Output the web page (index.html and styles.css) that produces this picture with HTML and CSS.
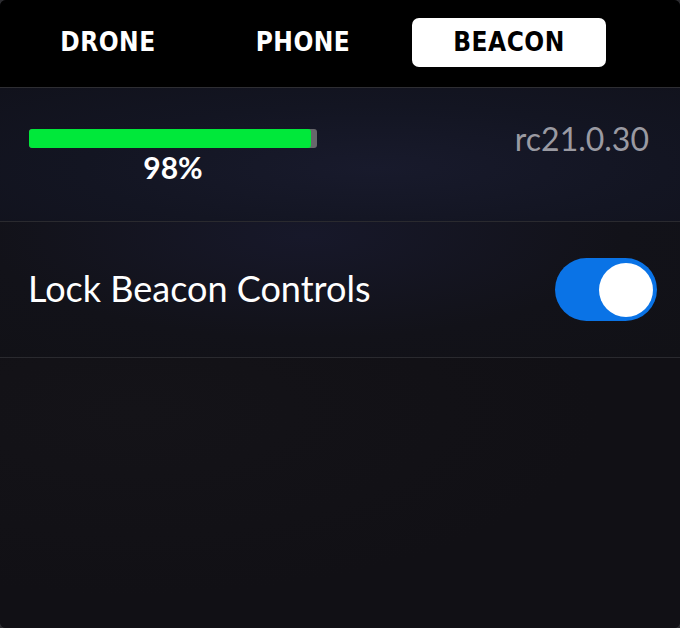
FILE: index.html
```html
<!DOCTYPE html>
<html lang="en">
<head>
    <meta charset="UTF-8">
    <meta name="viewport" content="width=device-width, initial-scale=1.0">
    <title>Beacon</title>
    <link rel="stylesheet" href="styles.css">
</head>
<body>
    <div class="panel">
        <!-- タブ -->
        <div class="tabs">
            <div class="tab">DRONE</div>
            <div class="tab">PHONE</div>
            <div class="tab active">BEACON</div>
        </div>

        <!-- バッテリー -->
        <div class="row battery-row">
            <div class="battery">
                <div class="battery-bar">
                    <div class="battery-fill" style="width: 98%"></div>
                </div>
                <div class="battery-label">98%</div>
            </div>
            <div class="version">rc21.0.30</div>
        </div>

        <!-- ロック -->
        <div class="row lock-row">
            <span class="lock-label">Lock Beacon Controls</span>
            <div class="toggle on"><div class="knob"></div></div>
        </div>

        <div class="empty"></div>
    </div>
</body>
</html>
```

FILE: styles.css
```css
html, body {
    margin: 0;
    height: 100%;
    background-color: #2c2c30;
    font-family: Lato, "Noto Sans", sans-serif;
}

.panel {
    display: flex;
    flex-direction: column;
    height: 628px;
    border-radius: 6px;
    overflow: hidden;
    background-color: #111015;
}

.tabs {
    display: grid;
    grid-template-columns: 192px 198px 204px;
    align-items: start;
    height: 88px;
    flex-shrink: 0;
    padding: 18px 0 0 12px;
    box-sizing: border-box;
    background-color: #000;
    border-bottom: 1px solid #2e2e33;
}

.tab {
    height: 49px;
    line-height: 49px;
    text-align: center;
    color: #fff;
    font-family: "DejaVu Sans Condensed", "DejaVu Sans", sans-serif;
    font-stretch: condensed;
    font-weight: bold;
    font-size: 26px;
    letter-spacing: 0.5px;
}

.tab.active {
    justify-self: end;
    width: 194px;
    background-color: #fff;
    color: #000;
    border-radius: 7px;
}

.row {
    display: flex;
    flex-shrink: 0;
    align-items: center;
    justify-content: space-between;
    border-bottom: 1px solid #2a2a2f;
}

.battery-row {
    height: 134px;
    align-items: flex-start;
    padding: 41px 31px 0 29px;
    box-sizing: border-box;
    background: radial-gradient(ellipse at 55% 60%, #181a2c 0%, #131522 55%, #11121c 100%);
}

.battery {
    width: 288px;
    display: flex;
    flex-direction: column;
    align-items: center;
}

.battery-bar {
    width: 100%;
    height: 19px;
    background-color: #67676b;
    border-radius: 3px;
    overflow: hidden;
}

.battery-fill {
    height: 100%;
    background-color: #00e83a;
    border-radius: 3px;
}

.battery-label {
    margin-top: 2px;
    color: #fff;
    font-weight: bold;
    font-size: 30px;
    line-height: 34px;
}

.version {
    color: #9a9aa2;
    font-size: 32px;
    line-height: 34px;
    margin-top: -7px;
}

.lock-row {
    height: 136px;
    padding: 0 23px 0 28px;
    box-sizing: border-box;
    background: radial-gradient(ellipse at 45% 10%, #17182a 0%, #121219 60%, #111116 100%);
}

.lock-label {
    color: #fff;
    font-size: 36px;
    margin-top: -3px;
}

.toggle {
    display: flex;
    align-items: center;
    justify-content: flex-end;
    width: 102px;
    height: 63px;
    padding: 0 4px;
    box-sizing: border-box;
    border-radius: 32px;
    background-color: #0a73e6;
}

.knob {
    width: 54px;
    height: 54px;
    border-radius: 50%;
    background-color: #fff;
}

.empty {
    flex: 1;
    background: radial-gradient(ellipse at 20% 20%, #141318 0%, #111015 60%);
}
```
